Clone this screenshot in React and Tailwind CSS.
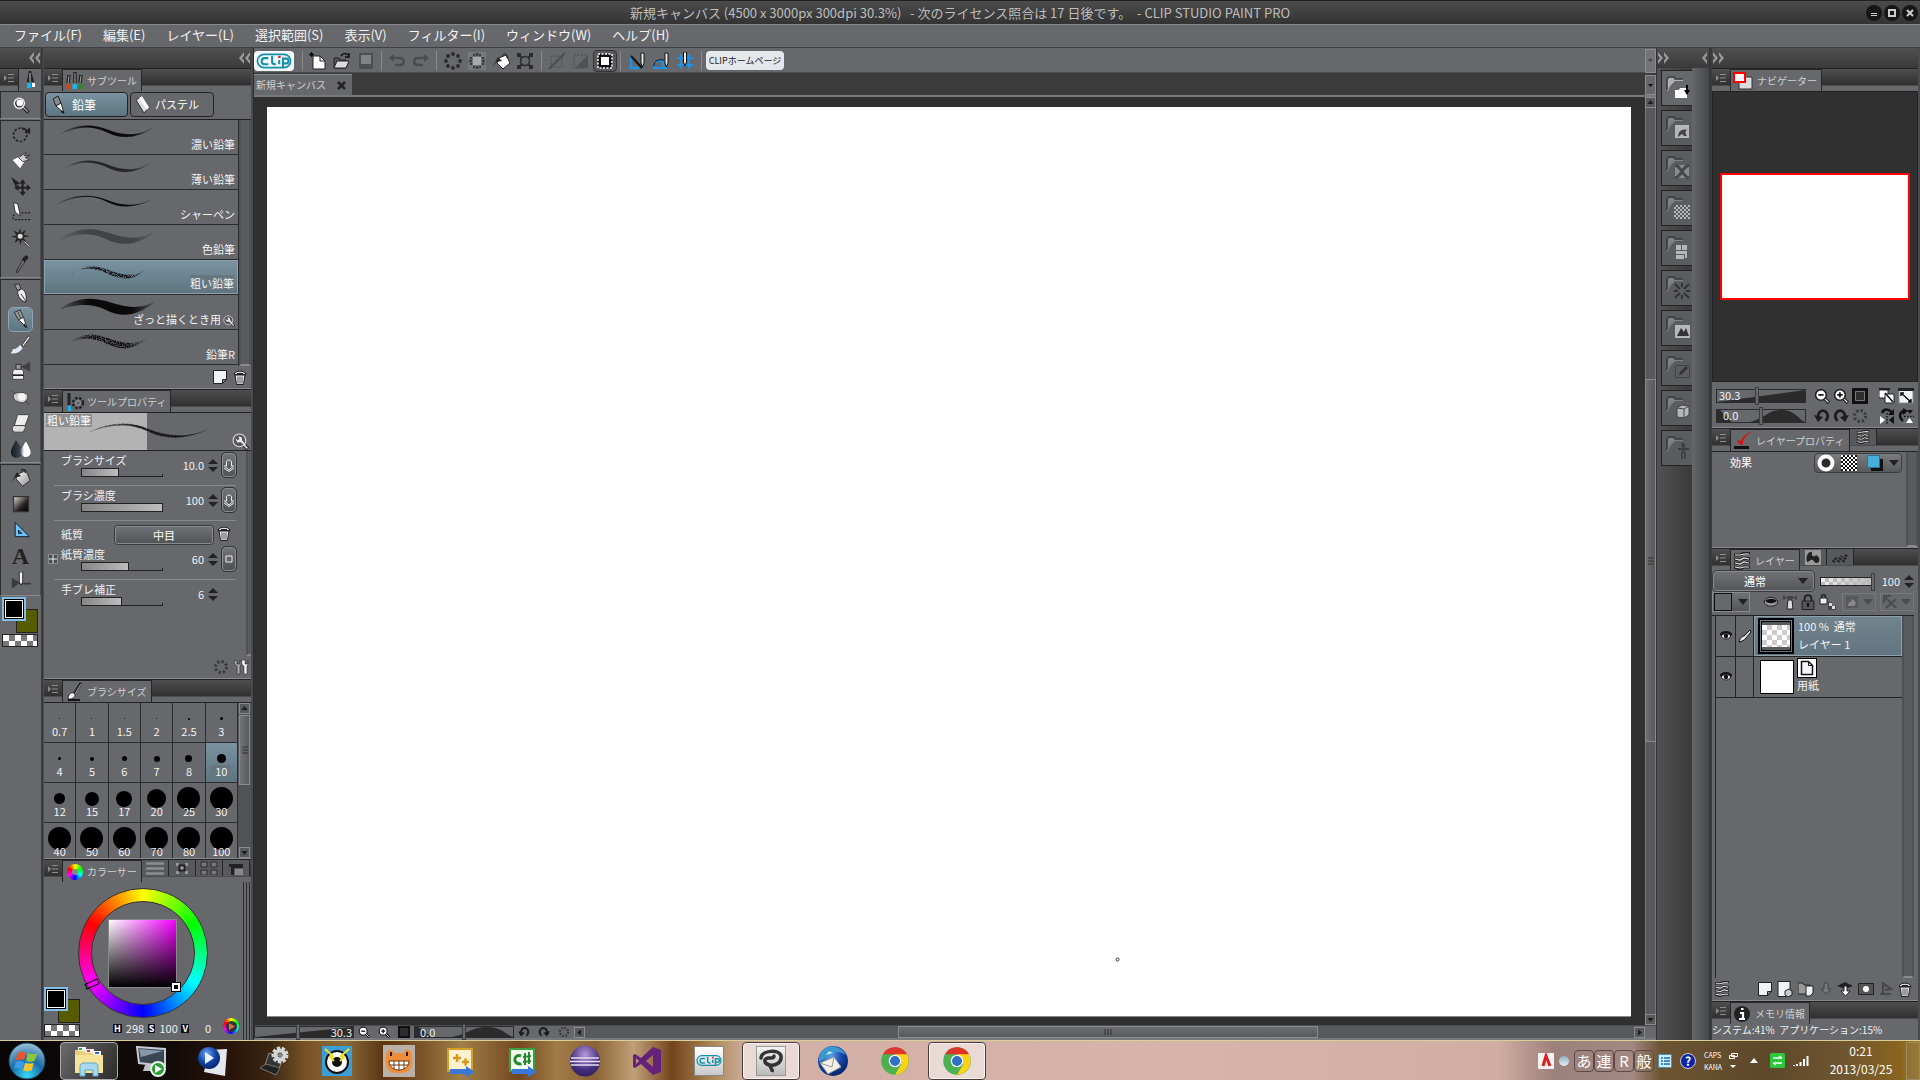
import React from "react";

const BTN = "flex shrink-0 items-center justify-center";
const SELECTED = "bg-[linear-gradient(#7b93a0,#5d7581)]";

function Svg({ w = 24, h, vb, children, className = "", ...rest }) {
  const height = h || w;
  return (
    <svg width={w} height={height} viewBox={vb || `0 0 ${w} ${height}`} className={"block shrink-0 " + className} fill="none" aria-hidden="true" {...rest}>
      {children}
    </svg>
  );
}

function Defs() {
  return (
    <svg width="0" height="0" className="absolute" aria-hidden="true">
      <defs>
        <linearGradient id="metal" x1="0" y1="0" x2="1" y2="1"><stop offset="0" stopColor="#fff" /><stop offset="1" stopColor="#8a8a8a" /></linearGradient>
        <linearGradient id="bw" x1="0" y1="0" x2="1" y2="1"><stop offset="0" stopColor="#e8e0dc" /><stop offset=".6" stopColor="#2a2222" /><stop offset="1" stopColor="#000" /></linearGradient>
        <linearGradient id="drop" x1="0" y1="0" x2="1" y2="0"><stop offset="0" stopColor="#111820" /><stop offset=".45" stopColor="#3a4450" /><stop offset=".65" stopColor="#fff" /><stop offset="1" stopColor="#fff" /></linearGradient>
        <linearGradient id="fade" x1="0" y1="0" x2="1" y2="0"><stop offset="0" stopColor="#000" stopOpacity=".15" /><stop offset=".3" stopColor="#000" stopOpacity=".9" /><stop offset=".75" stopColor="#000" stopOpacity=".9" /><stop offset="1" stopColor="#000" stopOpacity=".15" /></linearGradient>
        <radialGradient id="orb" cx=".5" cy=".9" r=".9"><stop offset="0" stopColor="#37d7f5" /><stop offset=".5" stopColor="#1b6ba8" /><stop offset="1" stopColor="#9fc3d8" /></radialGradient>
        <radialGradient id="navy" cx=".4" cy=".3" r=".8"><stop offset="0" stopColor="#6fa5ee" /><stop offset=".5" stopColor="#1346a8" /><stop offset="1" stopColor="#041a5c" /></radialGradient>
        <radialGradient id="violet" cx=".5" cy=".3" r=".8"><stop offset="0" stopColor="#b59ad8" /><stop offset=".6" stopColor="#46307e" /><stop offset="1" stopColor="#2a1858" /></radialGradient>
        <filter id="rough"><feTurbulence type="fractalNoise" baseFrequency="0.8" numOctaves="2" /><feColorMatrix values="0 0 0 0 0  0 0 0 0 0  0 0 0 0 0  0 0 0 3 -0.8" /><feComposite in="SourceGraphic" operator="in" /></filter>
        <pattern id="chk" width="4" height="4" patternUnits="userSpaceOnUse"><path d="M0 0h2v2H0zM2 2h2v2H2z" fill="#fff" /></pattern>
        <pattern id="chkDim" width="4" height="4" patternUnits="userSpaceOnUse"><path d="M0 0h2v2H0zM2 2h2v2H2z" fill="#b5b6b8" /></pattern>
      </defs>
    </svg>
  );
}

/* ---------- shared bits ---------- */

const Chevrons = ({ dir = "left", single }) => (
  <Svg w={single ? 7 : 12} h={14} className={dir === "right" ? "rotate-180" : ""}>
    <path d="M6 1 1 7l5 6V9.500L4 7l2-2.500z" fill="#9a9a9a" />
    {!single && <path d="M12 1 7 7l5 6V9.500L10 7l2-2.500z" fill="#9a9a9a" />}
  </Svg>
);

const CollapseBar = ({ children, className = "" }) => (
  <div className={"flex h-5 shrink-0 items-center bg-[linear-gradient(#505050,#3a3a3a)] px-px " + className}>{children}</div>
);

const MenuMark = () => (
  <button aria-label="パネルメニュー" className="flex h-[17px] w-[18px] shrink-0 items-center justify-center">
    <Svg w={10} h={10}><path d="M0 2l3 3-3 3z" fill="#8c8c8c" /><path d="M4 1.500h6M4 5h6M4 8.500h6" stroke="#8c8c8c" /></Svg>
  </button>
);

function PanelHeader({ icon, title, tabs, wide = "gap-0.5" }) {
  return (
    <div className="flex h-[23px] shrink-0 border-t border-[#232323] bg-[linear-gradient(#4e4e4e,#303030_16px,#67686c_17px)]">
      <MenuMark />
      <div className={"flex h-[22px] items-center border-x border-t border-[#262626] border-b-0 bg-[#67686c] pr-1 pl-0.5 " + wide}>
        {icon}
        <span className="text-[10px] leading-4 whitespace-nowrap text-[#cfcfcf]">{title}</span>
      </div>
      {tabs}
    </div>
  );
}

const SideTab = ({ label, children }) => (
  <button aria-label={label} className="flex h-4 w-[27px] shrink-0 items-center justify-center overflow-hidden border-r border-[#262626] bg-[#58595c]">{children}</button>
);

const Spinner = ({ label }) => (
  <span className="flex w-3 shrink-0 flex-col items-center gap-[3px]">
    <button aria-label={label + "を増やす"}><Svg w={10} h={5}><path d="M5 0l5 5H0z" fill="#222" /></Svg></button>
    <button aria-label={label + "を減らす"}><Svg w={10} h={5}><path d="M0 0h10L5 5z" fill="#222" /></Svg></button>
  </span>
);

const Swatches = () => (
  <div className="w-[38px] shrink-0">
    <div className="grid grid-cols-[14px_10px_12px] grid-rows-[12px_12px_12px]">
      <button aria-label="サブカラー" className="col-span-2 col-start-2 row-span-2 row-start-2 border border-[#222] bg-[#565b00]" />
      <button aria-label="メインカラー" className="z-10 col-span-2 col-start-1 row-span-2 row-start-1 border-2 border-[#7fbfe6] bg-black p-px"><span className="block size-full border border-white" /></button>
    </div>
    <button aria-label="透明色" className="mt-px block h-[13px] w-9 border border-[#222] bg-white bg-[repeating-conic-gradient(#777_0_25%,#fff_0_50%)] bg-[length:12px_12px]" />
  </div>
);

const Trash = () => (
  <Svg w={14} h={16}><path d="M2 6h10l-1.500 9.500h-7z" fill="#e6e6e6" stroke="#222" /><path d="M5 7.500v7M7 7.500v7M9 7.500v7" stroke="#555" /><path d="M1 5.500C2 1 12 1 13 5.500z" fill="#ddd" stroke="#222" /><path d="M4 4.500h6" stroke="#222" /></Svg>
);
const Page = () => (
  <Svg w={14} h={16}><path d="M.5 1.500h13v9l-4 4h-9z" fill="#eef3f5" stroke="#222" /><path d="M13.500 10.500h-4v4z" fill="#888" stroke="#222" /></Svg>
);
const Magnify = ({ sign, w = 16 }) => (
  <Svg w={w} vb="0 0 15 15"><path d="M9 9l5 5" stroke="#111" strokeWidth="3" /><path d="M10 10l3.500 3.500" stroke="#eee" strokeWidth="1.200" /><circle cx="6.500" cy="6.500" r="5" fill="#fff" stroke="#222" strokeWidth="1.500" /><path d={sign === "+" ? "M4 6.500h5M6.500 4v5" : "M4 6.500h5"} stroke="#111" strokeWidth="1.600" /></Svg>
);
const Turn = ({ flip, w = 16 }) => (
  <Svg w={w} vb="0 0 16 16" className={flip ? "-scale-x-100" : ""}><path d="M4 9C4 3 9 1 12 4c2.500 2.500 2 6-.5 9" stroke="#1b1b1b" strokeWidth="2.600" /><path d="M0 7l9 2-5 5z" fill="#1b1b1b" /></Svg>
);
const Gear = ({ w = 16 }) => (
  <Svg w={w} vb="0 0 16 16"><circle cx="8" cy="8" r="5.500" stroke="#3a3a3a" strokeWidth="3" strokeDasharray="2.300 2" /></Svg>
);
const FitBox = () => <Svg w={16}><path d="M0 0h16v16H0z" fill="#111" /><path d="M3.500 3.500h9v9h-9z" fill="#2d2d2d" stroke="#777" /></Svg>;

const BrushIcon = () => (
  <Svg w={20}><path d="M4 4l-1 8M10 1v11M16 4l-1 8" stroke="#222" strokeWidth="3.500" /><path d="M4 5l-1 7M10 2v10M16 5l-1 7" stroke="#a4a4a4" strokeWidth="1" /><path d="M1.500 13h4v5h-4z" fill="#d8431a" /><path d="M7.500 13h4.500v5H7.500z" fill="#18b4f0" /><path d="M13.500 13h4v5h-4z" fill="#2f8a16" /></Svg>
);
const ToolHeadIcon = () => (
  <Svg w={16} h={20}><path d="M8 1v10M6 12L8 2l3 10" stroke="#222" strokeWidth="2.500" /><path d="M8 3v8" stroke="#ccc" /><path d="M5 13h4v5H5z" fill="#18b4f0" /><path d="M10 13h3v4h-3z" fill="#fff" /></Svg>
);

const RangeOver = ({ label, value }) => (
  <input type="range" aria-label={label} defaultValue={value} className="absolute inset-0 m-0 size-full cursor-pointer opacity-0" />
);

/* ---------- title, menu ---------- */

function TitleBar() {
  return (
    <header className="flex h-6 shrink-0 items-center border-t border-[#222] bg-[linear-gradient(#4c4c4c,#333)] px-0.5">
      <div className="w-16" />
      <h1 className="flex-1 text-center text-[13px] leading-5 font-normal whitespace-pre text-[#bdbdbd]">新規キャンバス (4500 x 3000px 300dpi 30.3%)   - 次のライセンス照合は 17 日後です。  - CLIP STUDIO PAINT PRO</h1>
      <div className="flex w-16 justify-end gap-0.5">
        {[["最小化", "M5 8.500h6M5 10.500h6"], ["最大化", "M5 5h6v6H5z"], ["閉じる", "M5 5l6 6M11 5l-6 6"]].map(([l, d]) => (
          <button key={l} aria-label={l}><Svg w={16}><circle cx="8" cy="8" r="8" fill="#161616" /><path d={d} stroke="#ccc" strokeWidth={l === "最小化" ? 1.2 : 2} /></Svg></button>
        ))}
      </div>
    </header>
  );
}

function MenuBar() {
  return (
    <nav className="flex h-6 shrink-0 items-start gap-[21px] border-t border-b border-t-[#88898c] border-b-[#3e3f42] bg-[#67686c] pl-3.5">
      {["ファイル(F)", "編集(E)", "レイヤー(L)", "選択範囲(S)", "表示(V)", "フィルター(I)", "ウィンドウ(W)", "ヘルプ(H)"].map((m) => (
        <button key={m} className="text-[13px] leading-5 whitespace-nowrap text-[#f2f2f2]">{m}</button>
      ))}
    </nav>
  );
}

/* ---------- tool column ---------- */

const toolGroups = [
  [["ズーム", <><path d="M14 14l7 7" stroke="#222" strokeWidth="4" /><path d="M14 14l6 6" stroke="#bbb" strokeWidth="1.500" /><circle cx="10" cy="10" r="6" fill="#111" stroke="#e8e8e8" strokeWidth="2" /><circle cx="10.500" cy="9.500" r="4" fill="#fff" /></>]],
  [
    ["回転", <><circle cx="11" cy="13" r="8" stroke="#222" strokeWidth="2" strokeDasharray="3 2" /><path d="M13 5c4 0 5 2 7 4" stroke="#222" strokeWidth="2" /><path d="M23 4v8l-7-2z" fill="#222" /></>],
    ["操作", <><path d="M2 12l8-4 6 6-5 8z" fill="#fff" /><path d="M9 9l9-6-2 4 7-1-6 3 5 3-8 2z" fill="#ccc" stroke="#333" /></>],
    ["レイヤー移動", <><path d="M0 1l11 8-4 1-1 4z" fill="#222" /><path d="M14 8v13M8 14h13" stroke="#222" strokeWidth="2.500" /><path d="M14 4l4 5h-8zM14 24l4-5h-8zM4 14l5-4v8zM24 14l-5-4v8z" fill="#222" /></>],
    ["選択範囲", <><path d="M3 1l5 1 2 9 1 6-6-5z" fill="#fff" stroke="#222" /><path d="M23 13H12M23 21H5c-4 0-4-5 0-6" stroke="#222" strokeWidth="1.500" strokeDasharray="2.500 1.500" /></>],
    ["自動選択", <><path d="M13 13l9 9" stroke="#222" strokeWidth="3" /><path d="M13 13l9 9" stroke="#ccc" strokeWidth="1.500" /><path d="M11 0l1 6 6-4-3 6 7 2-7 1 3 6-5-3-2 7-1-7-6 4 3-6-7-2 7-1-4-6 6 3z" fill="#222" /><circle cx="11" cy="10" r="3" fill="#ddd" /></>],
    ["スポイト", <><path d="M6 22l8-15 3 2-9 13z" fill="#777" stroke="#222" /><path d="M13 6l4-4c4-1 5 3 2 5l-3 3z" fill="#222" /></>],
  ],
  [
    ["ペン", <><path d="M4 2l6-1 2 6-4 2z" fill="#999" stroke="#222" /><path d="M8 10l5-3c5 3 6 9 5 16-7-2-10-7-10-13z" fill="#eee" stroke="#222" /><path d="M12 13l6 9" stroke="#222" /></>],
    ["鉛筆", <><path d="M4 4l7-3 4 9-6 3z" fill="#999" stroke="#222" /><path d="M8 3l4 9" stroke="#333" /><path d="M9 13l6-3 4 12z" fill="#fff" stroke="#222" /><path d="M16 17l3 6-4-3z" fill="#000" /></>, true],
    ["筆", <><path d="M2 17c6 0 7-4 9-5l3 4c-3 5-9 7-15 6 2-1 3-3 3-5z" fill="#dcebf8" /><path d="M21 1l-8 11 2 2L23 3z" fill="#ddd" stroke="#222" /></>],
    ["エアブラシ", <><path d="M2 13c0-5 13-5 13 0v9H2z" fill="#eee" stroke="#333" /><path d="M2 17h13" stroke="#222" strokeWidth="2" /><path d="M6 4h6v6H6z" fill="#999" stroke="#222" /><path d="M12 7l11-6v12z" fill="#3f4043" /></>],
    ["デコレーション", <><path d="M1 4l5 5M22 21l-5-5" stroke="#333" /><path d="M3 9c6-4 12-3 17 0 1 5-2 9-6 10-6 0-13-4-11-10z" fill="#ccc" stroke="#333" /><circle cx="13" cy="12" r="4.500" fill="#f4f4f4" /></>],
    ["消しゴム", <><path d="M8 2h14l-5 13H4z" fill="#eee" stroke="#333" /><path d="M4 15h13v4l-3 4H5c-5-1-4-7-1-8z" fill="#ddd" stroke="#333" /></>],
    ["色混ぜ", <><path d="M6 2c4 6 6 9 6 9s2-3 6-9c4 7 6 11 6 14 0 7-9 8-12 3-3 5-12 4-12-3 0-3 2-7 6-14z" fill="url(#drop)" stroke="#222" strokeWidth=".6" /></>],
  ],
  [
    ["塗りつぶし", <><path d="M9 7l9-4 5 12-9 7-8-9z" fill="url(#metal)" stroke="#222" /><path d="M0 19l7-14 5 5-7 1z" fill="#222" /><path d="M12 4c2-4 6-2 5 2" stroke="#222" strokeWidth="1.500" /></>],
    ["グラデーション", <path d="M3 3h18v18H3z" fill="url(#bw)" stroke="#333" strokeWidth="1.500" />],
    ["図形", <path d="M5 3v17h17zM9 12l4 4H9z" fill="#6cc4fa" stroke="#123" strokeWidth="1.200" fillRule="evenodd" />],
    ["テキスト", null],
    ["ライン修正", <><path d="M1 7l10 6-10 7z" fill="#3a3b3d" /><path d="M10 14h14" stroke="#3a3b3d" strokeWidth="2" /><path d="M10 0h4v12l-2 4-2-4z" fill="#f4f4f4" stroke="#222" /></>],
  ],
];

function ToolColumn() {
  return (
    <aside className="flex w-[43px] shrink-0 flex-col border-r-2 border-[#3a3b3d] bg-[#67686c]">
      <CollapseBar className="justify-end"><button aria-label="折りたたむ"><Chevrons /></button></CollapseBar>
      <div className="flex h-[23px] shrink-0 border-t border-[#232323] bg-[linear-gradient(#4e4e4e,#303030_16px,#67686c_17px)]">
        <MenuMark />
        <div className="flex flex-1 items-center justify-center border-l border-[#262626] bg-[#67686c]"><ToolHeadIcon /></div>
      </div>
      {toolGroups.map((g, i) => (
        <div key={i} className="mb-px flex flex-col items-center border border-[#2b2c2e] border-r-[#4a4b4e] border-b-[#88898c]">
          {g.map(([label, icon, on]) => (
            <button key={label} aria-label={label} className="flex h-[26px] w-6 items-center justify-center">
              <span className={"flex size-[23px] items-center justify-center rounded-sm " + (on ? "bg-[linear-gradient(#7b93a0,#5d7581)] outline outline-[#8fa6b2]" : "")}>
                {icon ? <Svg w={20} vb="0 0 24 24">{icon}</Svg> : <span className="font-['Liberation_Serif',serif] text-[24px] leading-6 font-bold text-[#222]">A</span>}
              </span>
            </button>
          ))}
        </div>
      ))}
      <div className="pl-0.5"><Swatches /></div>
    </aside>
  );
}

/* ---------- sub tool panel ---------- */

function Stroke({ t = 2, rough, o = 1, x = 0, className = "" }) {
  const d = `M${15 + x} 15C${30 + x} ${4 - t / 2} 48 ${4 - t / 2} 62 ${10 - t}S92 ${19 - t / 2} ${112 - x} 6C92 ${19 + t} 76 ${18 + t} 62 ${11 + t}S32 ${5 + t} ${15 + x} 15z`;
  return <Svg w={120} h={26} className={className}><path d={d} fill="url(#fade)" opacity={o} filter={rough ? "url(#rough)" : undefined} /></Svg>;
}

const PencilMini = () => (
  <Svg w={16} h={20}><path d="M3 4l5-3 3 7-5 3z" fill="#888" stroke="#222" /><path d="M6 11l5-3 3 10z" fill="#fff" stroke="#222" /><path d="M12 15l2 4-3-2z" fill="#000" /></Svg>
);

const brushes = [
  ["濃い鉛筆", { t: 1 }], ["薄い鉛筆", { t: 1, o: 0.7, x: 3 }], ["シャーペン", { t: 0.4, x: -3 }], ["色鉛筆", { t: 3, o: 0.4 }],
  ["粗い鉛筆", { t: 1.5, rough: true, x: 10 }, "on"], ["ざっと描くとき用", { t: 4 }, "wrench"], ["鉛筆R", { t: 2.5, rough: true, x: 8 }],
];

const Wrench = ({ w = 12 }) => (
  <Svg w={w} vb="0 0 16 16"><path d="M10 10l5 5" stroke="#222" strokeWidth="3.500" /><path d="M9 9l5.500 5.500" stroke="#ddd" strokeWidth="1.500" /><circle cx="7" cy="7" r="6" fill="#555" stroke="#ddd" /><path d="M3 5l2.500 2L7 5.500 6 3l3 1 .5 3L13 11l-1 1-4-3.500-3 .5z" fill="#eee" /></Svg>
);

const Gutter = () => <div className="w-3 shrink-0 border-x-2 border-x-[#505154] border-b-2 border-b-[#88898c] bg-[#5a5b5e]" />;

function SubTool() {
  return (
    <section className="flex h-[321px] shrink-0 flex-col border-b border-[#88898c]">
      <PanelHeader icon={<BrushIcon />} title="サブツール" />
      <div className="flex h-7 shrink-0 gap-0.5 pt-px pl-px">
        <button className={"flex h-[25px] w-[83px] items-center gap-1.5 rounded-sm border border-[#232323] px-1 text-[12px] text-white " + SELECTED}><PencilMini />鉛筆</button>
        <button className="flex h-[25px] w-[84px] items-center gap-1 rounded-sm border border-[#232323] px-1 text-[11px] text-white">
          <Svg w={16} h={20}><path d="M1 5l6-4 7 11-5 6z" fill="#ddd" stroke="#333" /><path d="M7 1l7 11-2 3L4 3z" fill="#fff" /></Svg>パステル
        </button>
      </div>
      <div className="flex flex-1 border-t border-[#232323]">
        <ul className="flex-1 border-r border-[#2b2c2e]">
          {brushes.map(([name, s, mode]) => (
            <li key={name} className="h-[35px] border-b border-[#2b2c2e]">
              <button className={"relative flex size-full items-end justify-end gap-0.5 pr-[3px] pb-0.5 " + (mode === "on" ? "border border-[#8ba2ae] " + SELECTED : "")}>
                <Stroke {...s} className="absolute top-0 left-0" />
                <span className={"relative text-[11px] leading-4 text-[#f2f2f2] " + (mode === "on" ? "bg-[#68777f]" : "")}>{name}</span>
                {mode === "wrench" && <Wrench />}
              </button>
            </li>
          ))}
        </ul>
        <Gutter />
      </div>
      <div className="flex h-[22px] shrink-0 items-center justify-end gap-1.5 pr-1">
        <button aria-label="新規サブツール"><Page /></button>
        <button aria-label="サブツールを削除"><Trash /></button>
      </div>
    </section>
  );
}

/* ---------- tool property ---------- */

const Hand = ({ plain }) => (
  <button aria-label="影響元設定" className="flex h-6 w-3.5 shrink-0 items-center justify-center rounded-sm border border-[#8b8c8f] bg-[linear-gradient(#737478,#505154)] outline outline-[#333]">
    {plain ? <Svg w={8}><path d="M1 1h6v6H1z" stroke="#eee" /></Svg> : <Svg w={12} h={14}><path d="M3.500 5C2 1 10 1 8.500 5v3h2L6 12 1.500 8h2z" stroke="#eee" /><path d="M1 10l5 3.500L11 10" stroke="#eee" /></Svg>}
  </button>
);

function Prop({ label, value, fill, end, plus, last }) {
  return (
    <div className={"mx-2.5 flex h-[35px] shrink-0 items-start pt-px " + (last ? "" : "border-b border-[#88898c]")}>
      <div className="w-[7px] shrink-0">
        {plus && <button aria-label="展開" className="-ml-1.5 mt-2 block border border-[#8b8c8f] bg-[#4b4c4f]"><Svg w={8}><path d="M0 4h8M4 0v8" stroke="#eee" /></Svg></button>}
      </div>
      <div className="w-[103px] shrink-0">
        <div className="text-[11px] leading-4 whitespace-nowrap text-[#f0f0f0]">{label}</div>
        <div className="relative ml-5 h-[9px] w-[82px]">
          <div className="absolute right-0 bottom-0 h-[3px] w-full border-r border-b border-[#222]" />
          <div className="relative h-full border border-[#222] bg-[linear-gradient(90deg,#858585,#bdbdbd)]" style={{ width: fill + "%" }} />
          <RangeOver label={label} value={fill} />
        </div>
      </div>
      <div className="mt-px flex h-6 items-center gap-[3px]">
        <input aria-label={label + "の値"} defaultValue={value} className="w-10 bg-transparent text-right text-[11px] text-[#f0f0f0] outline-none" />
        <Spinner label={label} />
        {end}
      </div>
    </div>
  );
}

function ToolProperty() {
  return (
    <section className="flex h-[290px] shrink-0 flex-col border-b border-[#88898c]">
      <PanelHeader
        icon={<Svg w={20}><path d="M4 1v12" stroke="#222" strokeWidth="3" /><path d="M3 14h3v5H3z" fill="#18b4f0" /><circle cx="13" cy="11" r="5" stroke="#222" strokeWidth="2.500" strokeDasharray="2.500 1.500" /><circle cx="13" cy="11" r="2.500" stroke="#999" /></Svg>}
        title="ツールプロパティ"
      />
      <div className="relative flex h-[39px] shrink-0 items-start justify-between border-y border-[#232323] bg-[linear-gradient(90deg,#b3b3b3_103px,#67686c_103px)]">
        <span className="mt-px ml-0.5 bg-[#8d8e90] px-px text-[11px] leading-[13px] text-white">粗い鉛筆</span>
        <svg width="140" height="24" viewBox="10 2 108 20" preserveAspectRatio="none" className="absolute top-1.5 left-9" aria-hidden="true">
          <path d="M15 14C30 5 48 3 62 10S92 19 112 9C92 20 76 20 62 12S32 6 15 14z" fill="url(#fade)" opacity=".8" filter="url(#rough)" />
          <path d="M15 14C30 5 48 4 62 10S92 19 112 9C92 20 76 19 62 12S32 6 15 14z" fill="url(#fade)" opacity=".6" />
        </svg>
        <button aria-label="サブツール詳細" className="mt-5 mr-0.5"><Wrench w={17} /></button>
      </div>
      <div className="flex flex-1 overflow-hidden">
        <div className="flex flex-1 flex-col">
          <Prop label="ブラシサイズ" value="10.0" fill={46} end={<Hand />} />
          <Prop label="ブラシ濃度" value="100" fill={100} end={<Hand />} />
          <div className="flex h-6 shrink-0 items-end pl-[17px]">
            <span className="w-[53px] pb-px text-[11px] leading-5 text-[#f0f0f0]">紙質</span>
            <button className="h-5 w-[100px] rounded-sm border border-[#3b3c3e] bg-[linear-gradient(#737478,#505154)] text-[11px] leading-4 text-white outline outline-[#88898c] -outline-offset-2">中目</button>
            <button aria-label="紙質をクリア" className="ml-[3px] self-center"><Trash /></button>
          </div>
          <Prop label="紙質濃度" value="60" fill={59} plus end={<Hand plain />} />
          <Prop label="手ブレ補正" value="6" fill={50} last />
        </div>
        <Gutter />
      </div>
      <div className="flex h-[22px] shrink-0 items-center justify-end gap-1 pr-0.5">
        <button aria-label="初期設定に戻す"><Gear /></button>
        <button aria-label="設定"><Svg w={16}><path d="M1 1c0 5 2 5 3 6v8h3V7c2-2 1-5 0-6v4H4V2z" fill="#aaa" stroke="#333" strokeWidth=".7" /><path d="M9 1c-1 5 1 5 2 6v8h3V7c2-2 2-5 1-6v4h-3V1z" fill="#fff" stroke="#333" strokeWidth=".7" /></Svg></button>
      </div>
    </section>
  );
}

/* ---------- brush size ---------- */

const sizes = [["0.7", 1], ["1", 1], ["1.5", 1], ["2", 1], ["2.5", 2], ["3", 3], ["4", 3], ["5", 4], ["6", 5], ["7", 6], ["8", 7], ["10", 9], ["12", 11], ["15", 14], ["17", 16], ["20", 19], ["25", 23], ["30", 23], ["40", 23], ["50", 23], ["60", 23], ["70", 23], ["80", 23], ["100", 23]];

const ScrollBtn = ({ d, label, className = "" }) => (
  <button aria-label={label} className={"flex size-[11px] shrink-0 items-center justify-center border border-[#8b8c8f] bg-[#58595c] " + className}>
    <Svg w={7}><path d={d} fill="#1d1d1d" /></Svg>
  </button>
);
const UP = "M3.500 1l3 4h-6z", DOWN = "M.5 2h6l-3 4z", LEFT = "M5 .5v6l-4-3z", RIGHT = "M2 .5v6l4-3z";

function BrushSize() {
  return (
    <section className="flex h-[180px] shrink-0 flex-col border-b border-[#88898c]">
      <PanelHeader icon={<Svg w={20}><path d="M16 1L9 12" stroke="#222" strokeWidth="3" /><path d="M16 2l-6 10" stroke="#aaa" /><path d="M3 17c0-4 2-7 6-6 3 3-1 7-6 6z" fill="#f4f4f4" stroke="#222" /><path d="M3 18h12" stroke="#111" strokeWidth="2" /></Svg>} title="ブラシサイズ" />
      <div className="flex h-[156px] shrink-0 border-t border-[#232323]">
        <div className="grid flex-1 auto-rows-[40px] grid-cols-6 overflow-hidden">
          {sizes.map(([n, r]) => (
            <button key={n} className={"flex flex-col items-center border-r border-b border-[#2b2c2e] " + (n === "10" ? SELECTED : "")}>
              <span className="flex h-[31px] shrink-0 items-center justify-center"><span className="block rounded-full bg-black" style={{ width: r, height: r }} /></span>
              <span className={"-mt-[9px] text-[11px] leading-3 text-[#f2f2f2] " + (n === "10" ? "bg-[#68777f] px-1" : "")}>{n}</span>
            </button>
          ))}
        </div>
        <div className="flex w-[13px] flex-col items-center bg-[#515255]">
          <ScrollBtn d={UP} label="上へ" />
          <div className="mt-px flex h-[70px] w-[11px] items-center justify-center border border-[#8b8c8f] bg-[linear-gradient(90deg,#737478,#58595c)]"><Svg w={6} h={8}><path d="M0 1h6M0 4h6M0 7h6" stroke="#333" /></Svg></div>
          <div className="flex-1" />
          <ScrollBtn d={DOWN} label="下へ" />
        </div>
      </div>
    </section>
  );
}

/* ---------- colour circle ---------- */

function ColorPanel() {
  return (
    <section className="flex min-h-0 flex-1 flex-col">
      <PanelHeader
        wide="w-[80px] gap-1"
        icon={<span className="ml-0.5 size-4 shrink-0 rounded-full bg-[conic-gradient(yellow,lime,cyan,blue,magenta,red,yellow)] p-[5px]"><span className="block size-full rounded-full bg-[#888]" /></span>}
        title="カラーサー"
        tabs={<>
          <SideTab label="カラースライダー"><Svg w={20} h={14}><path d="M1 2.500h18M1 7.500h18M1 12.500h18" stroke="#8c8d8f" strokeWidth="2.500" /></Svg></SideTab>
          <SideTab label="カラーセット"><Svg w={16} h={14}><path d="M2 2h3v3H2zM11 2h3v3h-3zM2 10h3v3H2zM11 10h3v3h-3z" fill="#999" /><path d="M5.500 4.500h5v5h-5z" stroke="#222" strokeWidth="2" fill="#aaa" /></Svg></SideTab>
          <SideTab label="中間色"><Svg w={18} h={14}><path d="M1 1h6v5H1zM11 1h6v5h-6zM1 9h6v5H1zM11 9h6v5h-6z" stroke="#2b2b2b" fill="#777" /></Svg></SideTab>
          <SideTab label="近似色"><Svg w={18} h={14}><path d="M2 3h14v4H7v7H4V6H2z" fill="#222" /><path d="M8 8h8v6H8z" fill="#888" /></Svg></SideTab>
        </>}
      />
      <div className="flex flex-1">
        <div className="relative flex flex-1 flex-col items-center pr-0.5">
          <div className="mt-1.5 size-[130px] rounded-full border border-[#333] bg-[conic-gradient(yellow,lime,cyan,blue,magenta,red,yellow)] p-3">
            <div className="relative flex size-full items-center justify-center rounded-full border border-[#333] bg-[#67686c]">
              <div className="relative size-[69px] border border-[#888] bg-[linear-gradient(to_top,#000,transparent),linear-gradient(to_right,#fff,#f400ff)]">
                <span className="absolute -right-1 -bottom-1 size-2 border-2 border-white bg-black outline outline-black" />
              </div>
              <span className="absolute bottom-[17px] -left-[7px] h-1.5 w-3.5 -rotate-[25deg] border border-black" />
            </div>
          </div>
          <div className="absolute bottom-[3px] left-0"><Swatches /></div>
          <div className="absolute right-1 bottom-0.5 flex items-center gap-1 text-[11px] leading-4 text-[#f0f0f0]">
            {[["H", "298"], ["S", "100"], ["V", "0"]].map(([k, v]) => (
              <React.Fragment key={k}><span className="bg-[#0d1024] px-px text-[9px] leading-[9px] font-bold text-white">{k}</span><span className="w-[18px] text-right">{v}</span></React.Fragment>
            ))}
            <button aria-label="色空間を切り替え" className="mb-1 ml-2 flex size-4 items-center justify-center rounded-full bg-[conic-gradient(yellow,lime,cyan,blue,magenta,red,yellow)]"><span className="flex size-[11px] items-center justify-center rounded-full bg-[#333]"><Svg w={7}><path d="M1 0l6 3.500L1 7z" fill="#e06a50" /></Svg></span></button>
          </div>
        </div>
        <div className="w-2 bg-[repeating-linear-gradient(90deg,#2b2b2b_0_1px,#67686c_1px_3px)]" />
      </div>
    </section>
  );
}

/* ---------- document ---------- */

const Sep = () => <span className="h-5 w-px shrink-0 bg-[#88898c]" />;
const ClipLogo = ({ w = 38 }) => (
  <Svg w={w} h={w / 2} vb="0 0 38 19">
    <rect x="1.500" y="2.500" width="35" height="14" rx="7" stroke="#1490a8" strokeWidth="1.800" />
    <path d="M13 6.500H9c-4 0-4 6.500 0 6.500h4M17 4v6.500c0 2 1 2.500 4 2.500M24.500 8.500V13M28.500 16V7H32c3 0 3 5 0 5h-3" stroke="#1490a8" strokeWidth="2.200" />
    <path d="M23.500 4H26v2.500h-2.500z" fill="#e0281e" />
  </Svg>
);
const Cmd = ({ label, children, on }) => (
  <button aria-label={label} className={"flex h-[22px] w-6 shrink-0 items-center justify-center " + (on ? "rounded-sm border border-[#333] bg-[#57585b]" : "")}><Svg w={18}>{children}</Svg></button>
);

function CommandBar() {
  return (
    <div className="flex h-[25px] shrink-0 items-center border-b border-[#4a4b4e] bg-[#67686c] pt-px">
      <button aria-label="CLIP" className="mr-2 flex h-5 w-10 items-center justify-center rounded-sm bg-[#f5f8fa]"><ClipLogo w={36} /></button>
      <Sep />
      <div className="flex px-[3px]">
        <Cmd label="新規"><path d="M4 4h7l5 5v8H4z" fill="#fff" stroke="#222" /><path d="M11 4v5h5" stroke="#222" /><path d="M2.500 0v5M0 2.500h5M1 1l3 3M4 1L1 4" stroke="#111" /></Cmd>
        <Cmd label="開く"><path d="M1 16V6h5l1 2h6v8z" fill="#555" stroke="#222" /><path d="M1 16l3-7h12l-3 7z" fill="#ddd" stroke="#222" /><path d="M8 4c2-3 5-3 7-1M16 1v4h-4" stroke="#111" strokeWidth="1.500" /></Cmd>
        <Cmd label="保存"><path d="M2 1h14v16H2z" fill="#4e4f52" /><path d="M4 3h10v9H4z" fill="#828386" /></Cmd>
      </div>
      <Sep />
      <div className="flex px-[3px]">
        <Cmd label="取り消し"><path d="M4 6h8c5 0 5 7 0 7H7" stroke="#4b4c4f" strokeWidth="2.500" /><path d="M1 6l5-4v8z" fill="#4b4c4f" /></Cmd>
        <Cmd label="やり直し"><path d="M14 6H6c-5 0-5 7 0 7h5" stroke="#4b4c4f" strokeWidth="2.500" /><path d="M17 6l-5-4v8z" fill="#4b4c4f" /></Cmd>
      </div>
      <Sep />
      <div className="flex px-1">
        <Cmd label="消去">{[[9, 2], [14, 4], [16, 9], [14, 14], [9, 16], [4, 14], [2, 9], [4, 4]].map(([x, y]) => <circle key={x + "-" + y} cx={x} cy={y} r="1.900" fill="#2b2b2b" />)}</Cmd>
        <Cmd label="選択範囲外を消去"><path d="M0 0h18v18H0z" fill="#77787b" /><path d="M5 5h8v8H5z" fill="#a8a9ab" /><path d="M5 3h2M11 3h2M5 15h2M11 15h2M3 5v2M3 11v2M15 5v2M15 11v2M9 1v3M9 14v3M1 9h3M14 9h3" stroke="#3c3d3f" strokeWidth="2.500" /></Cmd>
        <Cmd label="塗りつぶし"><path d="M7 6l7-3 4 8-7 6-6-6z" fill="#fff" stroke="#222" /><path d="M0 16l6-11 4 4-6 1z" fill="#222" /><path d="M10 5c1-5 6-4 5 1" stroke="#222" /></Cmd>
        <Cmd label="拡大・縮小・回転"><path d="M2 2l14 14M16 2L2 16" stroke="#2b2b2b" strokeWidth="2" /><circle cx="9" cy="9" r="4.500" fill="#67686c" stroke="#2b2b2b" strokeWidth="1.500" /><path d="M1 1h4v4H1zM13 1h4v4h-4zM1 13h4v4H1zM13 13h4v4h-4z" fill="#2b2b2b" /></Cmd>
      </div>
      <Sep />
      <div className="flex px-[3px]">
        <Cmd label="選択解除"><path d="M3 4h11v11H3z" stroke="#4b4c4f" strokeDasharray="2 1.500" /><path d="M1 17L17 1" stroke="#4b4c4f" strokeWidth="2" /></Cmd>
        <Cmd label="選択範囲反転"><path d="M2 3h13v13H2z" stroke="#4b4c4f" strokeDasharray="2 1.500" /><path d="M16 3v13H3z" fill="#505154" /></Cmd>
        <Cmd label="選択範囲の境界線" on><path d="M2 2h14v14H2z" fill="#111" stroke="#fff" strokeWidth="1.500" strokeDasharray="2 1.500" /><path d="M5 5h8v8H5z" fill="#fff" /></Cmd>
      </div>
      <Sep />
      <div className="flex px-1">
        <Cmd label="定規にスナップ"><path d="M3 5v11h8" stroke="#1d90e8" strokeWidth="2.500" /><path d="M3 4l11 12" stroke="#111" strokeWidth="2" /><path d="M13 1v10l1.500 4 1.500-4V1z" fill="#eee" stroke="#111" /></Cmd>
        <Cmd label="特殊定規にスナップ"><path d="M1 16h14M2 15c0-5 4-7 9-6v6" stroke="#1d90e8" strokeWidth="2" /><path d="M2 14c0-5 4-7 10-6" stroke="#111" /><path d="M13 1v10l1.500 4 1.500-4V1z" fill="#eee" stroke="#111" /></Cmd>
        <Cmd label="グリッドにスナップ"><path d="M5 2v15M13 2v15M1 6h16M1 13h16" stroke="#1d90e8" strokeWidth="2" /><path d="M7.500 0v10L9 14l1.500-4V0z" fill="#eee" stroke="#111" /></Cmd>
      </div>
      <Sep />
      <a href="#home" className="ml-1 h-[19px] w-[78px] shrink-0 rounded-sm bg-[#e4e8ec] text-center text-[9px] leading-[19px] whitespace-nowrap text-[#222]">CLIPホームページ</a>
      <div className="flex-1" />
      <button aria-label="その他" className="flex h-6 w-[11px] items-center justify-center border border-[#8b8c8f] bg-[#737478]"><Svg w={7}><path d="M1 2h5L3.500 5z" fill="#444" /></Svg></button>
    </div>
  );
}

function Wedge({ hump, thumb, label, value, className = "" }) {
  return (
    <div className={"relative shrink-0 " + className}>
      <svg viewBox="0 0 90 12" preserveAspectRatio="none" className="block size-full border border-[#2b2c2e] bg-[#67686c]" aria-hidden="true">
        <path d={hump ? "M0 0h3l12 12H0zM34 12C50 8 52 0 66 0S84 10 90 12z" : "M0 12L90 0v12z"} fill="#2b2b2b" />
      </svg>
      <span className="absolute -inset-y-0.5 w-1 border border-[#3c3d3f] bg-[#67686c]" style={{ left: thumb + "%" }} />
      <span className={"absolute top-0 text-[11px] leading-3 text-[#f0f0f0] " + value[1]}>{value[0]}</span>
      <RangeOver label={label} value={thumb} />
    </div>
  );
}

function Document() {
  return (
    <main className="flex min-w-0 flex-1 flex-col border-l border-[#2b2b2b]">
      <CommandBar />
      <div className="flex h-6 shrink-0 items-end justify-between border-b-2 border-[#77787b] bg-[#3b3b3b]">
        <div className="flex h-[21px] w-[98px] items-center justify-between border-t border-[#88898c] bg-[#67686c] pr-1.5 pl-0.5">
          <span className="text-[10px] leading-4 whitespace-nowrap text-[#cfcfcf]">新規キャンバス</span>
          <button aria-label="閉じる"><Svg w={9}><path d="M1 1l7 7M8 1L1 8" stroke="#222" strokeWidth="2.500" /></Svg></button>
        </div>
        <button aria-label="タブ一覧" className="flex h-5 w-[11px] items-center justify-center border border-[#8b8c8f] bg-[#67686c]"><Svg w={7}><path d="M1 2h5L3.500 5z" fill="#111" /></Svg></button>
      </div>
      <div className="flex min-h-0 flex-1 bg-[#303030]">
        <div className="flex flex-1 pt-2.5 pr-3.5 pb-2 pl-[13px]">
          <div className="relative flex-1 border-b border-[#888] bg-white">
            <Svg w={5} className="absolute top-[93.500%] left-[62.200%]"><circle cx="2.500" cy="2.500" r="1.500" stroke="#333" /></Svg>
          </div>
        </div>
        <div className="flex w-[11px] shrink-0 flex-col border-x border-[#77787b] bg-[#58595c]">
          <ScrollBtn d={UP} label="上へスクロール" className="-ml-px" />
          <div className="flex-[272]" />
          <div className="-mx-px flex flex-[361] items-center justify-center border border-[#8b8c8f] bg-[linear-gradient(90deg,#6d6e72,#58595c)]"><Svg w={6} h={8}><path d="M0 1h6M0 4h6M0 7h6" stroke="#333" /></Svg></div>
          <div className="flex-[273]" />
          <ScrollBtn d={DOWN} label="下へスクロール" className="-ml-px" />
        </div>
      </div>
      <div className="flex h-[15px] shrink-0 items-center border-t border-b-2 border-t-[#4a4b4e] border-b-[#77787b] bg-[#67686c]">
        <Wedge label="表示倍率" thumb={42} value={["30.3", "right-0.5"]} className="h-3 w-[100px]" />
        <div className="flex w-[60px] shrink-0 items-center justify-around">
          <button aria-label="縮小"><Magnify sign="-" w={12} /></button><button aria-label="拡大"><Magnify sign="+" w={12} /></button><button aria-label="全体表示"><Svg w={12}><path d="M1 1h10v10H1z" fill="#2d2d2d" stroke="#111" strokeWidth="2" /></Svg></button>
        </div>
        <Wedge hump label="回転角" thumb={48} value={["0.0", "left-1.5"]} className="h-3 w-[100px]" />
        <div className="flex w-[60px] shrink-0 items-center justify-around">
          <button aria-label="左回転"><Turn w={12} /></button><button aria-label="右回転"><Turn flip w={12} /></button><button aria-label="回転をリセット"><Gear w={12} /></button>
        </div>
        <ScrollBtn d={LEFT} label="左へスクロール" />
        <div className="flex h-full min-w-0 flex-1 bg-[#58595c]">
          <div className="flex-[313]" />
          <div className="flex flex-[419] items-center justify-center border border-[#8b8c8f] bg-[linear-gradient(#6d6e72,#58595c)]"><Svg w={8} h={6}><path d="M1 0v6M4 0v6M7 0v6" stroke="#333" /></Svg></div>
          <div className="flex-[316]" />
        </div>
        <ScrollBtn d={RIGHT} label="右へスクロール" />
        <span className="w-[11px] shrink-0" />
      </div>
    </main>
  );
}

/* ---------- material dock ---------- */

const materials = [
  ["ダウンロード", <><path d="M13 19h4l1-2h7v10H13z" fill="#fff" /><path d="M25 14v7" stroke="#000" strokeWidth="2" /><path d="M22 19h6l-3 5z" fill="#000" /></>],
  ["画像", <><path d="M13 14h14v13H13z" fill="#b5b6b8" /><path d="M16 26c0-6 4-9 10-7-3 0-3 3-1 6h-3l-2-2z" fill="#444" /></>],
  ["カラーパターン", <><path d="M13 14h14v13H13z" fill="#8a8b8d" /><path d="M13 14c7 2 7 11 14 13M27 14c-7 2-7 11-14 13" stroke="#47484a" strokeWidth="3" /></>],
  ["単色パターン", <path d="M12 14h16v14H12z" fill="url(#chkDim)" />],
  ["漫画素材", <path d="M14 14h5v5h-5zM20 14h5v5h-5zM14 20h11v3H14zM14 24h8v4h-8zM23 23h2v4h-2z" fill="#b5b6b8" />],
  ["効果線", <path d="M13 13l5 5M27 13l-5 5M20 12v4M12 20h4M28 20h-4M13 27l5-5M27 27l-5-5M20 28v-4" stroke="#333" strokeWidth="2" />],
  ["背景", <><path d="M13 14h15v13H13z" fill="#b5b6b8" /><path d="M15 25l4-8 3 4 2-4 3 8z" fill="#333" /></>],
  ["テンプレート", <><path d="M13.500 14.500h14v12h-14z" stroke="#444" /><path d="M17 24l1-3 6-6 2 2-6 6z" fill="#333" /></>],
  ["3D", <><path d="M15 17l5-3 7 1v9l-5 3-7-1z" fill="#b5b6b8" stroke="#444" /><path d="M15 17l7 1 5-3M22 18v9" stroke="#444" /></>],
  ["ポーズ", <><circle cx="21" cy="14" r="2" fill="#3c3d3f" /><path d="M16 18h11M21.500 15v7" stroke="#3c3d3f" strokeWidth="2" /><path d="M20 28v-7M23 28v-7" stroke="#3c3d3f" strokeWidth="1.500" /></>],
];

function MaterialDock() {
  return (
    <aside className="flex w-[54px] shrink-0 flex-col border-x border-[#333]">
      <CollapseBar className="justify-between"><button aria-label="展開"><Chevrons dir="right" /></button><button aria-label="折りたたむ"><Chevrons single /></button></CollapseBar>
      <div className="flex flex-1">
        <div className="flex w-[35px] flex-col items-end gap-1 bg-[linear-gradient(90deg,#525252,#3a3a3a)] pt-0.5">
          {materials.map(([label, art], i) => (
            <button key={label} aria-label={"素材：" + label} className={"h-9 w-[31px] shrink-0 border-t border-b border-l border-[#232323] " + (i ? "bg-[#5b5c5f]" : "bg-[#67686c]")}>
              <Svg w={30} h={34}><path d="M5 20V8l2-2h5l1 2h8v2h-8l-5 5-2 5z" fill={i ? "#7f8082" : "#b0b0b0"} /><path d="M5 19V8l2-2h5l1 2h8" stroke="#37383a" strokeWidth="1.500" />{art}</Svg>
            </button>
          ))}
        </div>
        <div className="flex-1 bg-[linear-gradient(90deg,#66676b,#47484b)]" />
      </div>
    </aside>
  );
}

/* ---------- right panels ---------- */

function Navigator() {
  return (
    <section className="flex h-[360px] shrink-0 flex-col border-b border-[#88898c]">
      <PanelHeader wide="gap-1" icon={<Svg w={20}><path d="M6 6h13v12H6z" fill="#ddd" stroke="#333" /><path d="M1 2h11v9H1z" fill="#fff" stroke="#f00" strokeWidth="2" /></Svg>} title="ナビゲーター" />
      <div className="flex flex-1 items-center justify-center border border-[#232323] bg-[#303030] pr-[7px] pl-[7px]">
        <div className="aspect-[191/127] w-full border-2 border-[#f00] bg-white" />
      </div>
      <div className="flex h-[45px] shrink-0 flex-col gap-1 px-1 pt-1.5">
        <div className="flex h-4 items-center"><Wedge label="表示倍率" thumb={43} value={["30.3", "left-[3px]"]} className="h-3.5 w-[90px]" />
          <div className="flex flex-1 items-center justify-between pl-2"><button aria-label="縮小"><Magnify sign="-" /></button><button aria-label="拡大"><Magnify sign="+" /></button><button aria-label="100%"><FitBox /></button><span className="w-1" />
            <button aria-label="フィッティング"><Svg w={16}><path d="M0 2h9v8H0z" fill="#fff" stroke="#222" /><path d="M6 6h9v9H6z" fill="#fff" stroke="#222" /><path d="M0 1h11" stroke="#222" strokeWidth="2" /><path d="M6 5l8 9" stroke="#111" strokeWidth="1.500" /></Svg></button><button aria-label="全体表示"><Svg w={16}><path d="M1 1h14v14H1z" fill="#eef6f8" stroke="#888" /><path d="M0 1.500h16" stroke="#222" strokeWidth="3" /><path d="M3 5l10 9M3 8V5h3M13 11v3h-3" stroke="#111" strokeWidth="1.500" /></Svg></button></div>
        </div>
        <div className="flex h-4 items-center"><Wedge hump label="回転角" thumb={48} value={["0.0", "left-[7px]"]} className="h-3.5 w-[90px]" />
          <div className="flex flex-1 items-center justify-between pl-2"><button aria-label="左回転"><Turn /></button><button aria-label="右回転"><Turn flip /></button><button aria-label="回転をリセット"><Gear /></button><span className="w-1" />
            <button aria-label="左右反転"><Svg w={16}><path d="M3 5c2-5 8-4 10 0" stroke="#111" strokeWidth="2.500" /><path d="M15 1v6H9z" fill="#111" /><path d="M8 5v11" stroke="#111" strokeWidth="1.500" strokeDasharray="1.500 1.500" /><path d="M1 8l5 4-5 4z" fill="#fff" /><path d="M15 8l-5 4 5 4z" fill="#111" /></Svg></button><button aria-label="上下反転"><Svg w={16}><path d="M5 13C0 9 2 3 7 3" stroke="#111" strokeWidth="2.500" /><path d="M5 0l5 3-5 4z" fill="#111" /><path d="M6 8.500h10" stroke="#111" strokeWidth="1.500" strokeDasharray="1.500 1.500" /><path d="M9 2h6l-3 4z" fill="#111" /><path d="M8 15h7l-3.500-5z" fill="#fff" /></Svg></button></div>
        </div>
      </div>
    </section>
  );
}

const Layers = ({ w = 18 }) => (
  <Svg w={w} vb="0 0 18 18">
    <path d="M1 3h6l4-2h6M1 7l6 1 4-2 6 1M1 11l6 1 4-2 6 1M1 15l6 2 4-2 6 0" stroke="#222" strokeWidth="3" />
    <path d="M2 3h5l4-1h5M2 7l5 1 4-2 5 1M2 11l5 1 4-2 5 1M2 15l5 1 4-1h5" stroke="#e4e4e4" strokeWidth="1.200" />
  </Svg>
);

function LayerProperty() {
  return (
    <section className="flex h-[120px] shrink-0 flex-col border-b border-[#88898c]">
      <PanelHeader
        wide="gap-[3px]"
        icon={<Svg w={20}><path d="M4 11l5 4C10 8 14 3 19 1 13 2 9 7 8 10L5 9z" fill="#d8140e" /><path d="M1 15h15v3H1z" fill="#111" /></Svg>}
        title="レイヤープロパティ"
        tabs={<SideTab label="レイヤー検索"><Layers w={14} /></SideTab>}
      />
      <div className="flex flex-1 border-t border-[#232323]">
        <div className="flex flex-1 items-start justify-between pt-px pr-1 pl-[18px]">
          <span className="text-[11px] leading-[18px] text-white">効果</span>
          <div className="flex h-5 items-center gap-1.5 rounded-sm border border-[#3b3c3e] bg-[linear-gradient(#7a7b7f,#58595c)] px-0.5">
            <button aria-label="境界効果"><Svg w={18}><circle cx="9" cy="9" r="6.500" fill="#2b2b2b" stroke="#fff" strokeWidth="4" /></Svg></button>
            <button aria-label="トーン"><Svg w={16}><path d="M0 0h16v16H0z" fill="#111" /><path d="M0 0h16v16H0z" fill="url(#chk)" /></Svg></button>
            <button aria-label="レイヤーカラー" className="ml-1"><Svg w={16}><path d="M4 4h12v12H4z" fill="#111" /><path d="M.5.5h12v12H.500z" fill="#45aedc" stroke="#2a6f94" /></Svg></button>
            <button aria-label="効果メニュー"><Svg w={10} h={6}><path d="M0 0h10L5 6z" fill="#222" /></Svg></button>
          </div>
        </div>
        <Gutter />
      </div>
    </section>
  );
}

const Eye = () => (
  <Svg w={12} h={10}><path d="M0 4c3-4 9-4 12 0" stroke="#111" strokeWidth="2" /><path d="M1 5c3-3 7-3 10 0-3 4-7 4-10 0z" fill="#eee" stroke="#222" /><circle cx="6" cy="5" r="2.200" fill="#111" /></Svg>
);
const Lock = () => <Svg w={14} h={16}><path d="M3.500 8V5c0-5 7-5 7 0v3" stroke="#222" strokeWidth="2" /><path d="M1 7h12v8.500H1z" fill="#555" stroke="#222" /><path d="M7 9v4" stroke="#111" strokeWidth="2" /></Svg>;
const Caret = ({ c = "#222" }) => <Svg w={10} h={6}><path d="M0 0h10L5 6z" fill={c} /></Svg>;

function LayerPanel() {
  return (
    <section className="flex min-h-0 flex-1 flex-col border-b border-[#88898c]">
      <PanelHeader wide="gap-1" icon={<Layers />} title="レイヤー" tabs={<><SideTab label="オートアクション"><Svg w={18} h={16}><path d="M1 1h16v15H1z" fill="#999" /><path d="M3 13c-2-6 2-11 5-10-1 4 2 6 4 3 5 2 4 9 0 8-3-1-2-4-5-3-1 0-2 2-4 2z" fill="#222" /></Svg></SideTab><SideTab label="ヒストリー"><Svg w={16} h={12}><path d="M1 11l4-5M6 11l4-6M11 11l4-8" stroke="#222" strokeWidth="3" strokeDasharray="2 1" /></Svg></SideTab></>} />
      <div className="flex h-5 shrink-0 items-center">
        <label className="relative ml-px block h-5 w-[101px]">
          <span className="sr-only">合成モード</span>
          <select className="block h-5 w-full appearance-none rounded-sm border border-[#88898c] bg-[linear-gradient(#707175,#55565a)] pl-[30px] text-[11px] leading-[18px] text-white outline outline-[#3b3c3e]"><option>通常</option></select>
          <span className="pointer-events-none absolute top-[7px] right-1.5"><Caret /></span>
        </label>
        <div className="relative ml-1.5 h-[9px] w-[54px] border border-[#222] bg-[linear-gradient(90deg,transparent,#bbb),repeating-conic-gradient(#bbb_0_25%,#eee_0_50%)] bg-[length:auto,8px_8px]">
          <span className="absolute -top-[5px] -right-0.5 h-[18px] w-1 border border-[#3c3d3f] bg-[#67686c]" />
          <RangeOver label="不透明度" value={100} />
        </div>
        <input aria-label="不透明度の値" defaultValue="100" className="w-[26px] bg-transparent text-right text-[11px] text-[#f0f0f0] outline-none" />
        <span className="ml-[3px]"><Spinner label="不透明度" /></span>
      </div>
      <div className="mt-px flex h-5 shrink-0 items-center justify-between pr-1">
        <button aria-label="レイヤーカラー" className="flex h-5 w-[38px] items-center gap-1.5 border border-[#88898c] bg-[linear-gradient(#707175,#55565a)] pl-px"><span className="size-[18px] border border-[#111] bg-[#67686c]" /><Caret /></button>
        <span className="w-1" />
        <button aria-label="下のレイヤーでクリッピング"><Svg w={16}><path d="M1 7c4-5 10-5 14 0 0 7-14 7-14 0z" fill="#999" stroke="#222" /><path d="M2 7c4-3 9-3 12 0-4 3-8 3-12 0z" fill="#111" /></Svg></button>
        <button aria-label="参照レイヤー"><Svg w={14} h={16}><path d="M4 15l1-9h4l1 9z" fill="#ddd" stroke="#222" /><path d="M4 2h6v3H4zM0 1l4 3-4 2M14 1l-4 3 4 2" fill="#444" /></Svg></button>
        <button aria-label="レイヤーをロック"><Lock /></button>
        <button aria-label="透明ピクセルをロック"><Svg w={18} h={16}><path d="M2.500 4V3c0-3 4-3 4 0v1" stroke="#222" strokeWidth="1.500" /><path d="M1 4h7v6H1z" fill="#eee" stroke="#222" /><path d="M9 8h4v4h4v4H9z" fill="#444" /><path d="M10 9h3v3h-3zM13 12h3v3h-3z" fill="#ddd" /></Svg></button>
        <button aria-label="マスク" className="flex h-[18px] w-[34px] items-center justify-around border border-[#77787b]"><Svg w={14}><path d="M1 1h12v12H1z" fill="#57585b" /><path d="M3 11c0-6 4-3 4-7 4 2 5 5 2 7z" fill="#888" /></Svg><Caret c="#4b4c4f" /></button>
        <button aria-label="定規の範囲" className="flex h-[18px] w-[34px] items-center justify-around border border-[#77787b]"><Svg w={14}><path d="M1 1l12 12M13 4L3 13M1 8V1h7" stroke="#4b4c4f" strokeWidth="2" /></Svg><Caret c="#4b4c4f" /></button>
      </div>
      <div className="mt-[3px] mr-1 flex flex-1 border-t border-[#232323] pl-[3px]">
        <ul className="flex-1 border-l border-[#232323]">
          <li className="flex h-[41px] border-b border-[#232323]">
            <button aria-label="レイヤー 1 を表示" className={BTN + " w-5 border-r border-[#232323]"}><Eye /></button>
            <span className={BTN + " w-[18px] border-r border-[#232323]"}><Svg w={14}><path d="M1 13c1-4 3-6 5-6l6-6 1 2-5 6c-2 3-4 3-7 4z" fill="#ddd" stroke="#111" /></Svg></span>
            <button className="flex flex-1 items-center gap-1 border border-[#8ba2ae] bg-[linear-gradient(#71838d,#637580)] pl-[3px] text-left text-[11px] leading-[18px] text-[#f2f2f2]">
              <span className="flex size-9 shrink-0 border-2 border-black p-px"><span className="flex flex-1 items-center border border-black bg-[#5a5b5d]"><span className="h-[22px] flex-1 bg-[repeating-conic-gradient(#ccc_0_25%,#fff_0_50%)] bg-[length:10px_10px]" /></span></span>
              <span className="pb-0.5">100 %&nbsp; 通常<br />レイヤー 1</span>
            </button>
          </li>
          <li className="flex h-[41px] border-b border-[#232323]">
            <button aria-label="用紙を表示" className={BTN + " w-5 border-r border-[#232323]"}><Eye /></button>
            <span className="w-[18px] shrink-0 border-r border-[#232323]" />
            <button className="flex flex-1 items-center gap-[3px] pl-1.5 text-left text-[11px] leading-[14px] text-[#f2f2f2]">
              <span className="size-[34px] shrink-0 border border-black bg-white" />
              <span className="pb-1"><span className="flex size-5 items-center justify-center border border-black bg-white"><Svg w={14} h={16}><path d="M1.500 1.500h7l4 4v9h-11z" fill="#f2f6fa" stroke="#111" strokeWidth="1.500" /><path d="M8.500 1.500v4h4" stroke="#111" /></Svg></span><span className="block">用紙</span></span>
            </button>
          </li>
        </ul>
        <Gutter />
      </div>
      <div className="flex h-[22px] shrink-0 items-center pr-1.5 pl-0.5">
        <button aria-label="パレット表示"><Layers w={16} /></button>
        <div className="flex flex-1 items-center justify-between pl-7">
          <button aria-label="新規ラスターレイヤー"><Page /></button>
          <button aria-label="新規ベクターレイヤー"><Svg w={16}><path d="M1 .5h12v12l-3 3H1z" fill="#eef3f5" stroke="#222" /><path d="M8 10l4-2 3 2v4l-4 2-3-2z" fill="#ccc" stroke="#222" /></Svg></button>
          <button aria-label="新規フォルダー"><Svg w={16}><path d="M0 2h5l1 2h6v9H0z" fill="#999" stroke="#222" /><path d="M8 5h7v7l-3 3H8z" fill="#eef3f5" stroke="#222" /></Svg></button>
          <button aria-label="下のレイヤーに転写"><Svg w={14}><path d="M5 1h4v6h3l-5 5-5-5h3z" fill="#77787b" stroke="#444" /></Svg></button>
          <button aria-label="下のレイヤーに結合"><Svg w={16}><path d="M0 5l8-4 8 4-8 3z" fill="#222" /><path d="M7 5h3v5h3l-4.500 5L4 10h3z" fill="#fff" stroke="#222" /></Svg></button>
          <button aria-label="レイヤーマスクを作成"><Svg w={16} h={12}><path d="M.5.5h15v11H.500z" fill="#555" stroke="#222" /><circle cx="8" cy="6" r="3" fill="#fff" /></Svg></button>
          <button aria-label="マスクをレイヤーに適用"><Svg w={14}><path d="M4 12V1l8 6-6 1M1 12h11" stroke="#47484b" strokeWidth="2.200" /></Svg></button>
          <button aria-label="レイヤーを削除"><Trash /></button>
        </div>
      </div>
    </section>
  );
}

function RightPanels() {
  return (
    <aside className="flex w-[210px] shrink-0 flex-col border-r-2 border-l-2 border-r-[#4a4b4e] border-l-[#3a3b3d] bg-[#67686c]">
      <CollapseBar><button aria-label="折りたたむ"><Chevrons dir="right" /></button></CollapseBar>
      <Navigator />
      <LayerProperty />
      <LayerPanel />
      <section className="flex h-[39px] shrink-0 flex-col">
        <PanelHeader wide="gap-1" icon={<Svg w={18}><circle cx="9" cy="9" r="8" fill="#222" /><path d="M7 8h3v6M6 14h6M8 4h2.500" stroke="#fff" strokeWidth="2.200" /></Svg>} title="メモリ情報" />
        <div className="text-[10px] leading-3 whitespace-nowrap text-[#f0f0f0]">システム:41%&nbsp; アプリケーション:15%</div>
      </section>
    </aside>
  );
}

/* ---------- taskbar ---------- */

const Chrome = () => (
  <Svg w={30} vb="0 0 48 48"><circle cx="24" cy="24" r="22" fill="#4caf50" /><path d="M24 24L5 13C13-2 36-1 43 13z" fill="#e0342a" /><path d="M5 13l10 16L24 24V13z" fill="#4caf50" /><path d="M24 13h19c8 15-3 33-19 33l10-17z" fill="#fdd116" /><circle cx="24" cy="24" r="10" fill="#fff" /><circle cx="24" cy="24" r="8" fill="#2f6fc4" /></Svg>
);

const apps = [
  ["エクスプローラー", "dark", <Svg w={32}><path d="M2 5h10l2 3h14v20H2z" fill="#e8cf78" /><path d="M5 2h8v4H5z" fill="#f4f4f4" /><path d="M6 3h3v2H6z" fill="#2fae3c" /><path d="M12 4h9v4h-9z" fill="#eee" /><path d="M14 5h3v2h-3z" fill="#d33" /><path d="M20 6h8v4h-8z" fill="#fff" /><path d="M22 7h4v2h-4z" fill="#36c" /><path d="M2 10h28v18H2z" fill="#f6e39a" /><path d="M7 31V21c0-2 2-3 4-3h10c2 0 4 1 4 3v10h-5v-6h-8v6z" fill="#a8d8ee" stroke="#5aa6c8" /></Svg>],
  ["リモートデスクトップ", "", <Svg w={32}><path d="M2 2l28 2v17L4 18z" fill="#3a4654" stroke="#c8ccd2" strokeWidth="2" /><path d="M4 4l24 2L6 12z" fill="#8898a8" /><path d="M10 20h9v4l4 2H8z" fill="#c0c4c8" /><circle cx="23" cy="24" r="7" fill="#2a9a3a" stroke="#e8f4e8" strokeWidth="2" /><path d="M20 20l7 4-7 4z" fill="#fff" /></Svg>],
  ["メディアプレーヤー", "", <Svg w={32}><path d="M12 5l18-1-2 27-21-4z" fill="#e4e8ee" /><circle cx="12" cy="13" r="11" fill="url(#navy)" /><path d="M8 7l9 6-9 6z" fill="#e8f2ff" /></Svg>],
  ["デバイス設定", "", <Svg w={32}><path d="M10 8l14 4-4 12-14-4z" fill="#333" stroke="#888" /><path d="M1 23l6-4 14 4-4 7z" fill="#222" stroke="#777" /><circle cx="21" cy="10" r="6.500" stroke="#d4d6d8" strokeWidth="4" strokeDasharray="3 1.500" /><circle cx="21" cy="10" r="4.500" stroke="#d4d6d8" strokeWidth="4" /><circle cx="21" cy="10" r="2" fill="#888" /></Svg>],
  ["ビューアー", "", <Svg w={32}><path d="M1 1h30v30H1z" fill="#3d9ed6" /><circle cx="16" cy="17" r="11" fill="#fff" stroke="#111" strokeWidth="2" /><circle cx="16" cy="17" r="5" fill="#111" /><path d="M4 4l8 7-3 1 4 4M28 4l-8 7 3 1-4 4" stroke="#f4e020" strokeWidth="2" /></Svg>],
  ["カエル", "", <Svg w={32}><path d="M0 0h32v32H0z" fill="#b9b1a6" /><path d="M3 14C2 4 9 2 11 8h10c3-7 9-3 8 6 1 12-5 14-13 14S2 26 3 14z" fill="#f08c3a" /><path d="M6 16h20c0 12-20 12-20 0z" fill="#fff" stroke="#6a3a14" /><path d="M7 20h18M11 16v8M16 16v9M21 16v8" stroke="#6a3a14" /><path d="M8 7v4M24 7v4" stroke="#222" strokeWidth="2" /></Svg>],
  ["C++", "", <Svg w={32}><path d="M3 4h24v22H3z" fill="#fdf2d0" stroke="#d8a028" strokeWidth="2" /><path d="M8 13h8M12 9v8M17 17h7M20.500 13.500v7" stroke="#d8961c" strokeWidth="2.500" /><path d="M5 24h16v-3l9 6-9 5v-3H5z" fill="#3a78d8" /></Svg>],
  ["C#", "", <Svg w={32}><path d="M3 4h24v22H3z" fill="#f2faf0" stroke="#3aa040" strokeWidth="2" /><path d="M14 11c-7-3-9 8-1 8l1-1" stroke="#208a2c" strokeWidth="3" /><path d="M18 8v12M22 7v12M16 12l8-1M16 17l8-1" stroke="#208a2c" strokeWidth="2" /><path d="M5 24h16v-3l9 6-9 5v-3H5z" fill="#3a78d8" /></Svg>],
  ["Eclipse", "", <Svg w={32}><ellipse cx="16" cy="16" rx="15" ry="15.500" fill="url(#violet)" /><path d="M2 13h28M1 16.500h30M2 20h28" stroke="#e6def4" strokeWidth="1.600" /></Svg>],
  ["Visual Studio", "", <Svg w={30} vb="0 0 30 30"><path d="M21 1l8 3v22l-8 3L9 18l-6 4-2-1V9l2-1 6 4zM21 9l-7 6 7 6zM4 12v6l3-3z" fill="#68217a" fillRule="evenodd" /></Svg>],
  ["CLIP STUDIO", "", <span className="flex h-[30px] w-[30px] items-center justify-center border border-[#888] bg-[linear-gradient(#fff,#c8c8c8)]"><ClipLogo w={26} /></span>],
  ["CLIP STUDIO PAINT", "light", <span className="flex h-[30px] w-[30px] items-center justify-center border border-[#999] bg-[linear-gradient(#f4f4f4,#bbb)]"><Svg w={28}><path d="M4 11C5 3 22 2 24 9c1 7-6 10-11 9-6-1-7-6-2-7 4 0 6 0 6-2" stroke="#333" strokeWidth="3.500" strokeLinecap="round" strokeLinejoin="round" /><path d="M13 18c0 4 3 3 2 7" stroke="#333" strokeWidth="3.500" /></Svg></span>],
  ["Thunderbird", "", <Svg w={32}><circle cx="16" cy="16" r="15" fill="url(#navy)" /><path d="M2 12C6-1 22-2 29 10c-7-5-11-3-15 0L2 17z" fill="#3a9ad0" /><path d="M9 10l3-4 4 2z" fill="#bfe4f4" /><path d="M3 18l14-6 7 10-13 7z" fill="#f2efe6" stroke="#999" /><path d="M3 18l12 4 2-10" stroke="#999" /></Svg>],
  ["Chrome", "", <Chrome />],
  ["Google Chrome", "light", <Chrome />],
];

function Taskbar() {
  return (
    <footer className="flex h-10 shrink-0 items-center border-t border-[#d8cf9a] bg-[linear-gradient(90deg,#0a0606_0,#120a08_9%,#2a140a_12%,#3a2410_14%,#7a5428_16%,#8a6a3a_18%,#5a3414_20%,#7c5428_22%,#a08048_24%,#74461f_27%,#a07c48_29%,#8a6234_31%,#c0a078_33%,#74441c_35%,#a88450_37%,#c8a690_38.500%,#d2b0a6_40%,#d6b4aa_62%,#d0aea2_78%,#9c807a_81%,#a48882_85%,#6c5432_86.500%,#5e482a_92%,#6e5530_96%,#8a6420_99%,#b08420_100%)]">
      <button aria-label="スタート" className="ml-2 shrink-0">
        <Svg w={38} vb="0 0 40 40"><circle cx="20" cy="20" r="19" fill="url(#orb)" stroke="#16384e" /><path d="M10 12c3-2 6-2 9-1l-2 8c-3-1-6-1-9 1z" fill="#e8562a" /><path d="M21 11c3 2 6 2 10 1l-3 8c-3 1-6 1-9 0z" fill="#8cc63a" /><path d="M8 21c3-2 6-1 9 0l-2 8c-3-2-6-2-9-1z" fill="#3a9ae8" /><path d="M18 22c3 1 6 1 9 0l-2 8c-3 1-6 1-9 0z" fill="#fbc42a" /></Svg>
      </button>
      <div className="ml-3 flex h-full items-center">
        {apps.map(([label, state, icon]) => (
          <button key={label} aria-label={label} className="flex h-full w-[62px] items-center justify-center">
            <span className={"flex h-[38px] w-[58px] items-center justify-center " + (state === "dark" ? "rounded-sm border border-[#aaa] bg-[linear-gradient(120deg,#6a6a6a,#2c2a2a)]" : state === "light" ? "rounded-sm border border-[#4a3c3a] bg-[#eadad6] ring-1 ring-white/70 ring-inset" : "")}>{icon}</span>
          </button>
        ))}
      </div>
      <div className="flex-1" />
      <div className="flex items-center text-white">
        <button aria-label="ATOK"><Svg w={16}><rect width="16" height="16" rx="1" fill="#f2f2f2" /><path d="M5 13L8 3l4 10" stroke="#d8201c" strokeWidth="3" /></Svg></button>
        <span className="mx-[5px] h-2.5 w-2.5 rounded-full bg-[linear-gradient(#8ab0c8,#e8eef0)]" />
        {["あ", "連", "R", "般"].map((c) => <button key={c} className="h-[22px] w-5 rounded-sm border border-[#5c4a48] text-center text-[15px] leading-[18px]">{c}</button>)}
        <button aria-label="辞書" className="ml-1"><Svg w={14}><path d="M.5.5h13v13H.500z" fill="#cfeefc" stroke="#4a90b8" /><path d="M3 4h2M6 4h6M3 7h2M6 7h6M3 10h2M6 10h6" stroke="#1c6ea8" strokeWidth="1.500" /></Svg></button>
        <button aria-label="ヘルプ" className="ml-2 flex size-4 items-center justify-center rounded-full border border-[#ccc] bg-[#0c24a8] text-[12px] leading-3 font-bold">?</button>
        <span className="ml-2 text-[7px] leading-3">CAPS<br />KANA</span>
        <Svg w={10} h={18} className="ml-1.5"><path d="M3.500 1.500h6v3h-6zM1.500 3.500h5v3h-5z" stroke="#fff" /><path d="M2 13h6l-3 3z" fill="#fff" /></Svg>
        <button aria-label="隠れているアイコン" className="ml-3"><Svg w={8} h={5}><path d="M4 0l4 5H0z" fill="#fff" /></Svg></button>
        <Svg w={15} className="ml-3"><rect width="15" height="15" rx="1.500" fill="#2ac83a" /><path d="M3 5h9M9 3l3 2M12 10H3M6 12l-3-2" stroke="#fff" strokeWidth="1.500" /></Svg>
        <Svg w={16} h={12} className="ml-2"><path d="M1 11v-1M4 11V9M7.500 11V7M11 11V4M14.500 11V1" stroke="#fff" strokeWidth="2" /></Svg>
        <time className="ml-[15px] w-[74px] pb-0.5 text-center text-[12px] leading-[18px]">0:21<br />2013/03/25</time>
        <button aria-label="デスクトップの表示" className="ml-2 h-[38px] w-3.5 border border-[#9a8a60] bg-[#8a7448]/60" />
      </div>
    </footer>
  );
}

export default function App() {
  return (
    <div lang="ja" className="flex h-screen w-full flex-col overflow-hidden bg-[#67686c] font-['Noto_Sans_CJK_JP',sans-serif]">
      <Defs />
      <TitleBar />
      <MenuBar />
      <div className="flex min-h-0 flex-1">
        <ToolColumn />
        <aside className="flex w-[210px] shrink-0 flex-col border-r-2 border-l border-[#4a4b4e] bg-[#67686c]">
          <CollapseBar className="justify-end"><button aria-label="折りたたむ"><Chevrons /></button></CollapseBar>
          <SubTool />
          <ToolProperty />
          <BrushSize />
          <ColorPanel />
        </aside>
        <Document />
        <MaterialDock />
        <RightPanels />
      </div>
      <Taskbar />
    </div>
  );
}
